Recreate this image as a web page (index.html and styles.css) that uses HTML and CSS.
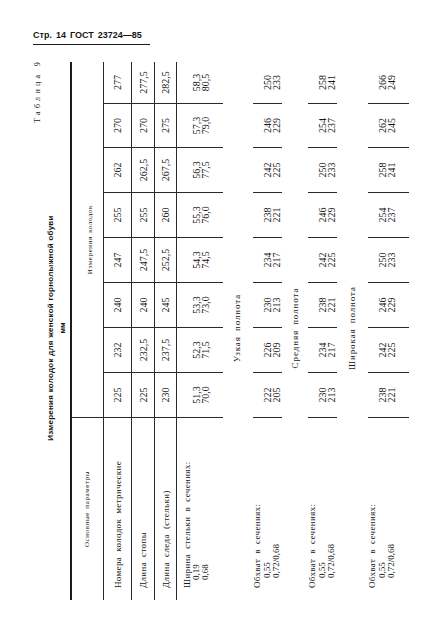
FILE: index.html
```html
<!DOCTYPE html>
<html lang="ru">
<head>
<meta charset="utf-8">
<title>ГОСТ 23724—85, стр. 14</title>
<link rel="stylesheet" href="styles.css">
</head>
<body>
<div class="page">
  <header class="running-head">Стр. 14 ГОСТ 23724—85</header>
  <div class="rot-frame">
    <div class="rot">
      <div class="table-no">Таблица 9</div>
      <h1 class="title">Измерения колодок для женской горнолыжной обуви</h1>
      <div class="unit">мм</div>
      <div class="tbl">
        <div class="row head">
          <div class="cell h-param">Основные параметры</div>
          <div class="cell h-meas">Измерения колодок</div>
        </div>
        <div class="row r1">
          <div class="cell lbl">Номера колодок метрические</div>
          <div class="cell num">225</div><div class="cell num">232</div><div class="cell num">240</div><div class="cell num">247</div><div class="cell num">255</div><div class="cell num">262</div><div class="cell num">270</div><div class="cell num">277</div>
        </div>
        <div class="row r2">
          <div class="cell lbl">Длина стопы</div>
          <div class="cell num">225</div><div class="cell num">232,5</div><div class="cell num">240</div><div class="cell num">247,5</div><div class="cell num">255</div><div class="cell num">262,5</div><div class="cell num">270</div><div class="cell num">277,5</div>
        </div>
        <div class="row r3">
          <div class="cell lbl">Длина следа (стельки)</div>
          <div class="cell num">230</div><div class="cell num">237,5</div><div class="cell num">245</div><div class="cell num">252,5</div><div class="cell num">260</div><div class="cell num">267,5</div><div class="cell num">275</div><div class="cell num">282,5</div>
        </div>
        <div class="row r4">
          <div class="cell lbl multi">Ширина стельки в сечениях:<span class="ind">0,19</span><span class="ind">0,68</span></div>
          <div class="cell pair">51,3<br>70,0</div><div class="cell pair">52,3<br>71,5</div><div class="cell pair">53,3<br>73,0</div><div class="cell pair">54,3<br>74,5</div><div class="cell pair">55,3<br>76,0</div><div class="cell pair">56,3<br>77,5</div><div class="cell pair">57,3<br>79,0</div><div class="cell pair">58,3<br>80,5</div>
        </div>

        <div class="sub s1">Узкая полнота</div>
        <div class="row ob g1">
          <div class="cell lbl multi">Обхват в сечениях:<span class="ind">0,55</span><span class="ind">0,72/0,68</span></div>
          <div class="cell pair">222<br>205</div><div class="cell pair">226<br>209</div><div class="cell pair">230<br>213</div><div class="cell pair">234<br>217</div><div class="cell pair">238<br>221</div><div class="cell pair">242<br>225</div><div class="cell pair">246<br>229</div><div class="cell pair">250<br>233</div>
        </div>

        <div class="sub s2">Средняя полнота</div>
        <div class="row ob g2">
          <div class="cell lbl multi">Обхват в сечениях:<span class="ind">0,55</span><span class="ind">0,72/0,68</span></div>
          <div class="cell pair">230<br>213</div><div class="cell pair">234<br>217</div><div class="cell pair">238<br>221</div><div class="cell pair">242<br>225</div><div class="cell pair">246<br>229</div><div class="cell pair">250<br>233</div><div class="cell pair">254<br>237</div><div class="cell pair">258<br>241</div>
        </div>

        <div class="sub s3">Широкая полнота</div>
        <div class="row ob g3">
          <div class="cell lbl multi">Обхват в сечениях:<span class="ind">0,55</span><span class="ind">0,72/0,68</span></div>
          <div class="cell pair">238<br>221</div><div class="cell pair">242<br>225</div><div class="cell pair">246<br>229</div><div class="cell pair">250<br>233</div><div class="cell pair">254<br>237</div><div class="cell pair">258<br>241</div><div class="cell pair">262<br>245</div><div class="cell pair">266<br>249</div>
        </div>
      </div>
    </div>
  </div>
</div>
</body>
</html>
```

FILE: styles.css
```css
html, body {
  margin: 0;
  padding: 0;
  background: #ffffff;
}

.page {
  width: 440px;
  height: 623px;
  box-sizing: border-box;
  padding: 24px 0 0 33px;
  color: #161616;
  font-family: "Liberation Serif", "DejaVu Serif", serif;
  overflow: hidden;
}

.running-head {
  display: inline-block;
  font-family: "Liberation Sans", "DejaVu Sans", sans-serif;
  font-weight: bold;
  font-size: 9px;
  line-height: 12px;
  word-spacing: 1.5px;
  padding: 0 8px 3px 0;
  border-bottom: 1px solid #1a1a1a;
}

.rot-frame {
  width: 380px;
  height: 538px;
  margin: 17px 0 0 -3px;
  position: relative;
}

/* the table is typeset sideways on the page */
.rot {
  width: 538px;
  height: 380px;
  transform-origin: 0 0;
  transform: translateY(538px) rotate(-90deg);
}

.table-no {
  height: 14px;
  padding-top: 1px;
  box-sizing: border-box;
  text-align: right;
  font-size: 8px;
  line-height: 13px;
  letter-spacing: 3.3px;
  margin-right: -3px;
}

.title {
  margin: 0;
  height: 13px;
  text-align: center;
  padding-left: 6px;
  font-family: "Liberation Sans", "DejaVu Sans", sans-serif;
  font-weight: bold;
  font-size: 8px;
  line-height: 13px;
  letter-spacing: 0.25px;
}

.unit {
  height: 13px;
  text-align: center;
  padding-left: 6px;
  font-family: "Liberation Sans", "DejaVu Sans", sans-serif;
  font-weight: bold;
  font-size: 7.5px;
  line-height: 12px;
}

.tbl {
  border-top: 2px solid #1c1c1c;
}

.row {
  display: grid;
  grid-template-columns: 182px repeat(6, 45px) 44px 42px;
}

.cell {
  box-sizing: border-box;
}

.row.head {
  grid-template-columns: 182px 356px;
  height: 31px;
  border-bottom: 1px solid #2a2a2a;
  font-size: 7px;
  letter-spacing: 0.6px;
  word-spacing: 1px;
}

.h-param {
  text-align: center;
  padding-top: 11px;
}

.h-meas {
  text-align: center;
  padding-top: 14px;
  border-left: 1px solid #2a2a2a;
}

.r1, .r2, .r3 {
  border-bottom: 1px solid #2a2a2a;
}

.r1 { height: 27px; }
.r2 { height: 22px; }
.r3 { height: 21px; }
.r4 { height: 46px; }

.lbl {
  font-size: 9px;
  letter-spacing: 0.35px;
  word-spacing: 2.5px;
  padding-left: 12px;
  display: flex;
  align-items: center;
}

.lbl.multi {
  display: block;
  line-height: 9px;
}

.ind {
  display: block;
  padding-left: 8px;
  letter-spacing: 0;
}

.num {
  border-left: 1px solid #2a2a2a;
  display: flex;
  align-items: center;
  justify-content: center;
  font-size: 10px;
}

.pair {
  border-left: 1px solid #2a2a2a;
  text-align: center;
  font-size: 10px;
  line-height: 9px;
}

.r4 .lbl.multi { padding-top: 6px; }
.r4 .pair { padding-top: 15px; }

.sub {
  text-align: center;
  font-size: 9px;
  line-height: 14px;
  letter-spacing: 0.9px;
  word-spacing: 2px;
  padding-left: 6px;
}

.s1 { margin-top: 7px; }
.s2 { margin-top: 7px; }
.s3 { margin-top: 9px; }

.ob .lbl.multi {
  line-height: 9.5px;
  padding-top: 0;
}

.ob .ind {
  padding-left: 10px;
}

.ob .pair {
  line-height: 9.5px;
  padding-top: 9.5px;
}

.g1 { height: 28px; margin-top: 9px; }
.g2 { height: 28px; margin-top: 6px; }
.g3 { height: 41px; margin-top: 9px; }
```
